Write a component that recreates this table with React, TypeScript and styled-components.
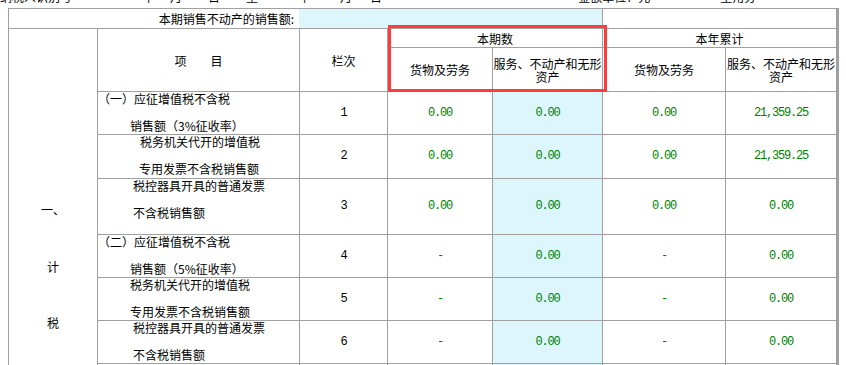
import React from 'react'
import styled, { createGlobalStyle } from 'styled-components'

const GlobalStyle = createGlobalStyle`
    html, body {
        margin: 0;
        padding: 0;
        background: #ffffff;
    }
    body {
        font-family: "Noto Sans CJK SC", "Liberation Sans", sans-serif;
        font-size: 12px;
        color: #000000;
    }
`

const Page = styled.div`
    position: relative;
    width: 846px;
    height: 365px;
    overflow: hidden;
`

const TopStrip = styled.div`
    height: 8px;
    overflow: hidden;
    display: flex;
    align-items: flex-start;
`

const StripText = styled.span<{ left: number }>`
    margin-left: ${props => props.left}px;
    margin-top: -9px;
    line-height: 12px;
    white-space: nowrap;
`

const Sheet = styled.div`
    margin-left: 8px;
    width: 829px;
    display: grid;
    grid-template-columns: 88px 201px 87px 104px 109px 122px 110px;
    grid-template-rows: 19px 18px 43px 42px 43px 55px 42px 42px 42px 42px;
    gap: 1px;
    padding: 1px;
    background: #a0a0a0;
`

const Cell = styled.div<{ cols?: number, rows?: number, blue?: boolean }>`
    grid-column: span ${props => props.cols || 1};
    grid-row: span ${props => props.rows || 1};
    background: ${props => props.blue ? "#dcf6fc" : "#ffffff"};
    display: flex;
    align-items: center;
    justify-content: center;
    text-align: center;
    line-height: 13px;
    overflow: hidden;
`

const LabelCell = styled(Cell)`
    justify-content: flex-end;
    padding-right: 5px;
`

// the input cell covers the line on its left, as in the form
const InputCell = styled(Cell)`
    margin-left: -1px;
`

const SideCell = styled.div`
    grid-column: 1;
    grid-row: 2 / span 9;
    background: #ffffff;
    display: flex;
    flex-direction: column;
    align-items: center;
    padding-top: 153px;
    line-height: 56.5px;
`

const ItemCell = styled.div`
    background: #ffffff;
    display: flex;
    flex-direction: column;
    gap: 13.5px;
    line-height: 13.5px;
    white-space: nowrap;
`

const ItemLine = styled.span<{ indent: number }>`
    padding-left: ${props => props.indent}px;
`

const Num = styled.span<{ green?: boolean }>`
    font-family: "Liberation Mono", "DejaVu Sans Mono", monospace;
    font-size: 12px;
    letter-spacing: -1.2px;
    color: ${props => props.green ? "#008000" : "#000000"};
`

const RedFrame = styled.div`
    position: absolute;
    left: 388px;
    top: 25px;
    width: 219px;
    height: 67px;
    border: 3px solid #ff3c3c;
    box-sizing: border-box;
    pointer-events: none;
`

interface Row {
    lines: [string, number][]
    no: string
    values: string[]
}

const rows: Row[] = [
    { lines: [["（一）应征增值税不含税", 0], ["销售额（3%征收率）", 32]], no: "1", values: ["0.00", "0.00", "0.00", "21,359.25"] },
    { lines: [["税务机关代开的增值税", 42], ["专用发票不含税销售额", 41]], no: "2", values: ["0.00", "0.00", "0.00", "21,359.25"] },
    { lines: [["税控器具开具的普通发票", 35], ["不含税销售额", 35]], no: "3", values: ["0.00", "0.00", "0.00", "0.00"] },
    { lines: [["（二）应征增值税不含税", 0], ["销售额（5%征收率）", 32]], no: "4", values: ["-", "0.00", "-", "0.00"] },
    { lines: [["税务机关代开的增值税", 32], ["专用发票不含税销售额", 32]], no: "5", values: ["-", "0.00", "-", "0.00"] },
    { lines: [["税控器具开具的普通发票", 35], ["不含税销售额", 35]], no: "6", values: ["-", "0.00", "-", "0.00"] },
]

export default function App() {
    return (
        <Page>
            <GlobalStyle />
            <TopStrip>
                <StripText left={0}>纳税人识别号</StripText>
                <StripText left={70}>年</StripText>
                <StripText left={16}>月</StripText>
                <StripText left={26}>日</StripText>
                <StripText left={26}>至</StripText>
                <StripText left={40}>年</StripText>
                <StripText left={30}>月</StripText>
                <StripText left={18}>日</StripText>
                <StripText left={196}>金额单位：元</StripText>
                <StripText left={70}>至角分</StripText>
            </TopStrip>
            <Sheet>
                <SideCell>
                    <span>一、</span>
                    <span>计</span>
                    <span>税</span>
                    <span>依</span>
                    <span>据</span>
                </SideCell>

                <LabelCell cols={2}>本期销售不动产的销售额:</LabelCell>
                <InputCell cols={3} blue></InputCell>
                <Cell cols={2}></Cell>

                <Cell rows={2}>项　　目</Cell>
                <Cell rows={2}>栏次</Cell>
                <Cell cols={2}>本期数</Cell>
                <Cell cols={2}>本年累计</Cell>
                <Cell>货物及劳务</Cell>
                <Cell>服务、不动产和无形资产</Cell>
                <Cell>货物及劳务</Cell>
                <Cell>服务、不动产和无形资产</Cell>

                {rows.map(r => (
                    <React.Fragment key={r.no}>
                        <ItemCell>
                            {r.lines.map(([text, indent]) => (
                                <ItemLine key={text} indent={indent}>{text}</ItemLine>
                            ))}
                        </ItemCell>
                        <Cell><Num>{r.no}</Num></Cell>
                        {r.values.map((v, i) => (
                            <Cell key={i} blue={i === 1}><Num green>{v}</Num></Cell>
                        ))}
                    </React.Fragment>
                ))}

                <ItemCell></ItemCell>
                <Cell></Cell>
                <Cell></Cell>
                <Cell blue></Cell>
                <Cell></Cell>
                <Cell></Cell>
            </Sheet>
            <RedFrame />
        </Page>
    )
}
